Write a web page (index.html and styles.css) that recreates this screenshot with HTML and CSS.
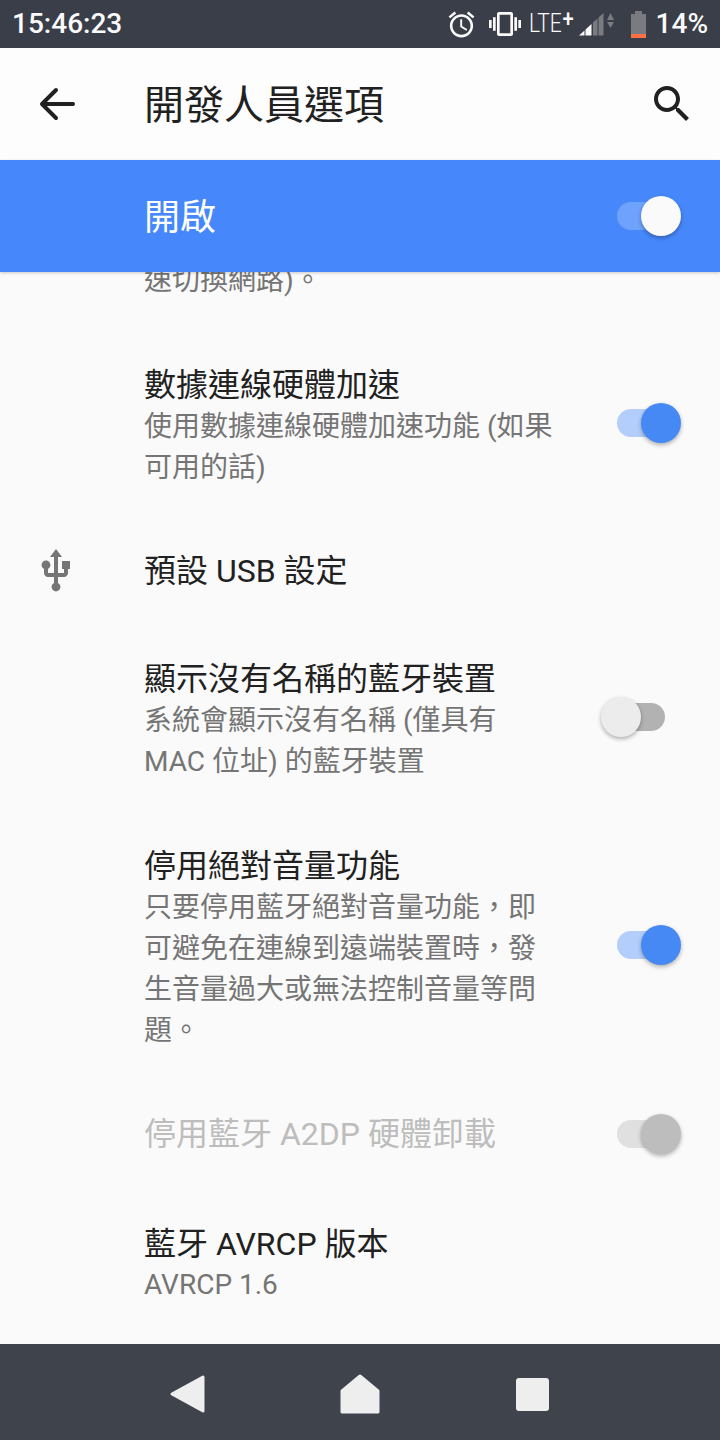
FILE: index.html
```html
<!doctype html>
<html>
<head>
    <meta charset="utf-8">
    <link rel="stylesheet" href="styles.css">
</head>
<body>
    <div class="status">
        <span class="clock">15:46:23</span>
        <svg class="ic-alarm" viewBox="0 0 24 24"><path d="M22 5.72l-4.6-3.86-1.29 1.53 4.6 3.86L22 5.72zM7.88 3.39L6.6 1.86 2 5.71l1.29 1.53 4.59-3.85zM12.5 8H11v6l4.75 2.85.75-1.23-4-2.37V8zM12 4c-4.97 0-9 4.03-9 9s4.03 9 9 9c4.97 0 9-4.03 9-9s-4.03-9-9-9zm0 16c-3.87 0-7-3.13-7-7s3.13-7 7-7 7 3.13 7 7-3.13 7-7 7z"/></svg>
        <svg class="ic-vibrate" viewBox="0 0 24 24"><path d="M0 15h2V9H0v6zm3 2h2V7H3v10zm19-8v6h2V9h-2zm-3 8h2V7h-2v10zM16.5 3h-9C6.67 3 6 3.67 6 4.5v15c0 .83.67 1.5 1.5 1.5h9c.83 0 1.5-.67 1.5-1.5v-15c0-.83-.67-1.5-1.5-1.5zM16 19H8V5h8v14z"/></svg>
        <span class="lte">LTE<span class="plus">+</span></span>
        <svg class="ic-signal" viewBox="0 0 36 24">
            <polygon class="on" points="0,23.5 5.5,23.5 5.5,18.4"/>
            <polygon class="on" points="6.5,23.5 12.5,23.5 12.5,12 6.5,17.5"/>
            <polygon class="off" points="14,23.5 18.5,23.5 18.5,6.5 14,10.6"/>
            <polygon class="off" points="19.5,23.5 24.5,23.5 24.5,1 19.5,5.6"/>
            <polygon class="off" points="28,8 31.5,1 35,8"/>
            <polygon class="off" points="28,10 35,10 31.5,16"/>
        </svg>
        <span class="battery"><span class="batt-nub"></span><span class="batt-body"><span class="batt-level"></span></span></span>
        <span class="percent">14%</span>
    </div>

    <div class="toolbar">
        <svg class="ic-back" viewBox="0 0 24 24"><path d="M20.5 12H5.5M12 5l-7 7 7 7"/></svg>
        <span class="toolbar-title">開發人員選項</span>
        <svg class="ic-search" viewBox="0 0 24 24"><path d="M15.5 14h-.79l-.28-.27C15.41 12.59 16 11.11 16 9.5 16 5.91 13.09 3 9.5 3S3 5.91 3 9.5 5.91 16 9.5 16c1.61 0 3.09-.59 4.23-1.57l.27.28v.79l5 4.99L20.49 19l-4.99-5zm-6 0C7.01 14 5 11.99 5 9.5S7.01 5 9.5 5 14 7.01 14 9.5 11.99 14 9.5 14z"/></svg>
    </div>

    <div class="master">
        <span class="master-label">開啟</span>
        <span class="switch master-switch"></span>
    </div>

    <div class="list">
        <div class="row row-cut">
            <div class="text"><div class="sub">速切換網路)。</div></div>
        </div>
        <div class="row">
            <div class="text">
                <div class="title">數據連線硬體加速</div>
                <div class="sub">使用數據連線硬體加速功能 (如果可用的話)</div>
            </div>
            <span class="switch on"></span>
        </div>
        <div class="row single">
            <svg class="ic-usb" viewBox="0 0 24 24"><path d="M15 7v4h1v2h-3V5h2l-3-4-3 4h2v8H8v-2.07c.7-.37 1.2-1.08 1.2-1.93 0-1.21-.99-2.2-2.2-2.2-1.21 0-2.2.99-2.2 2.2 0 .85.5 1.56 1.2 1.93V13c0 1.11.89 2 2 2h3v3.05c-.71.37-1.2 1.1-1.2 1.95 0 1.22.99 2.2 2.2 2.2 1.21 0 2.2-.98 2.2-2.2 0-.85-.49-1.58-1.2-1.95V15h3c1.11 0 2-.89 2-2v-2h1V7h-4z"/></svg>
            <div class="text">
                <div class="title">預設 USB 設定</div>
            </div>
        </div>
        <div class="row">
            <div class="text">
                <div class="title">顯示沒有名稱的藍牙裝置</div>
                <div class="sub">系統會顯示沒有名稱 (僅具有 MAC 位址) 的藍牙裝置</div>
            </div>
            <span class="switch off"></span>
        </div>
        <div class="row">
            <div class="text">
                <div class="title">停用絕對音量功能</div>
                <div class="sub">只要停用藍牙絕對音量功能，即可避免在連線到遠端裝置時，發生音量過大或無法控制音量等問題。</div>
            </div>
            <span class="switch on"></span>
        </div>
        <div class="row single">
            <div class="text">
                <div class="title disabled">停用藍牙 A2DP 硬體卸載</div>
            </div>
            <span class="switch dis"></span>
        </div>
        <div class="row row-last">
            <div class="text">
                <div class="title">藍牙 AVRCP 版本</div>
                <div class="sub">AVRCP 1.6</div>
            </div>
        </div>
    </div>

    <div class="nav">
        <div class="nav-btn"><svg class="ic-nav" viewBox="0 0 40 40"><polygon points="4,20 35,3 35,37"/></svg></div>
        <div class="nav-btn"><svg class="ic-nav" viewBox="0 0 40 40"><polygon points="20,2 38,17 38,38 2,38 2,17"/></svg></div>
        <div class="nav-btn"><span class="ic-square"></span></div>
    </div>
</body>
</html>
```

FILE: styles.css
```css
* {
    margin: 0;
    padding: 0;
    box-sizing: border-box;
}
body {
    width: 720px;
    height: 1440px;
    display: flex;
    flex-direction: column;
    overflow: hidden;
    background: #fafafa;
    font-family: Roboto, "Noto Sans CJK TC", sans-serif;
}

/* status bar */
.status {
    height: 48px;
    flex: none;
    display: flex;
    align-items: center;
    padding: 0 12px 0 12px;
    background: #3a3e49;
    color: #fafafa;
}
.clock, .percent {
    font-size: 28px;
    font-weight: 500;
    line-height: 48px;
}
.clock {
    margin-right: auto;
}
.status svg {
    fill: #fafafa;
    flex: none;
}
.ic-alarm {
    width: 31px;
    height: 31px;
    margin: 0 12px 0 -1px;
}
.ic-vibrate {
    width: 32px;
    height: 32px;
    margin-right: 8px;
}
.lte {
    width: 46px;
    font-size: 25px;
    font-weight: 300;
    line-height: 48px;
    white-space: nowrap;
    transform: scaleX(.84);
    transform-origin: left center;
}
.plus {
    font-size: 24px;
    font-weight: 500;
    position: relative;
    top: -5px;
    margin-left: 1px;
}
.ic-signal {
    width: 36px;
    height: 24px;
    margin: 0 16px 0 4px;
}
.ic-signal .off {
    fill: #797b80;
}
.battery {
    width: 16px;
    height: 27px;
    margin-right: 9px;
    display: flex;
    flex-direction: column;
    align-items: center;
}
.batt-nub {
    width: 7px;
    height: 3px;
    background: #797b80;
}
.batt-body {
    flex: 1;
    width: 15px;
    display: flex;
    align-items: flex-end;
    background: #797b80;
}
.batt-level {
    width: 100%;
    height: 4px;
    background: #ff7043;
}

/* toolbar */
.toolbar {
    height: 112px;
    flex: none;
    display: flex;
    align-items: center;
    padding: 0 24px 0 32px;
    background: #fdfdfd;
}
.ic-back {
    width: 48px;
    height: 48px;
    margin-right: 64px;
    fill: none;
    stroke: #212121;
    stroke-width: 2;
    stroke-linecap: round;
    stroke-linejoin: round;
}
.toolbar-title {
    flex: 1;
    padding-bottom: 4px;
    font-size: 40px;
    color: #212121;
}
.ic-search {
    width: 48px;
    height: 48px;
    fill: #212121;
}

/* blue on/off bar */
.master {
    height: 112px;
    flex: none;
    display: flex;
    align-items: center;
    padding: 0 39px 0 144px;
    background: #4688fb;
    position: relative;
    z-index: 1;
    box-shadow: 0 1px 3px rgba(0, 0, 0, .2);
}
.master-label {
    flex: 1;
    padding-bottom: 4px;
    font-size: 36px;
    color: #fff;
}

/* switches */
.switch {
    display: block;
    flex: none;
    width: 80px;
    height: 40px;
    position: relative;
}
.switch::before {
    content: "";
    position: absolute;
    left: 16px;
    top: 6px;
    width: 48px;
    height: 28px;
    border-radius: 14px;
}
.switch::after {
    content: "";
    position: absolute;
    top: 0;
    right: 0;
    width: 40px;
    height: 40px;
    border-radius: 50%;
    box-shadow: 0 2px 4px rgba(0, 0, 0, .3);
}
.master-switch::before { background: #6ea2fc; }
.master-switch::after { background: #fafafa; }
.on::before { background: #b4cefb; }
.on::after { background: #4688f4; }
.off::before { background: #b2b2b2; }
.off::after { background: #ececec; right: 40px; }
.dis::before { background: #e0e0e0; }
.dis::after { background: #bdbdbd; }

/* settings list */
.list {
    flex: 1;
    overflow: hidden;
}
.row {
    display: flex;
    align-items: center;
    padding: 32px 39px 31.5px 144px;
}
.row-cut {
    margin-top: -12px;
    padding-top: 0;
}
.single {
    min-height: 108px;
    align-items: flex-start;
}
.single .switch {
    align-self: center;
}
.row .switch {
    margin-bottom: 7px;
}
.row-last {
    margin-top: -1px;
}
.row-last .sub {
    margin-top: -1px;
}
.text {
    width: 416px;
    margin-right: auto;
}
.title {
    font-size: 32px;
    line-height: 41px;
    color: #212121;
}
.title.disabled {
    color: #bdbdbd;
}
.sub {
    font-size: 28px;
    line-height: 41px;
    color: #757575;
}
.ic-usb {
    width: 48px;
    height: 48px;
    flex: none;
    margin: -4px 64px 0 -112px;
    fill: #757575;
}

/* nav bar */
.nav {
    height: 96px;
    flex: none;
    display: flex;
    justify-content: center;
    align-items: center;
    padding-top: 4px;
    background: #3f434c;
}
.nav-btn {
    width: 172px;
    display: flex;
    justify-content: center;
}
.ic-nav {
    width: 40px;
    height: 40px;
    fill: #eee;
    stroke: #eee;
    stroke-width: 3;
    stroke-linejoin: round;
}
.ic-square {
    width: 33px;
    height: 33px;
    border-radius: 3px;
    background: #eee;
}
```
